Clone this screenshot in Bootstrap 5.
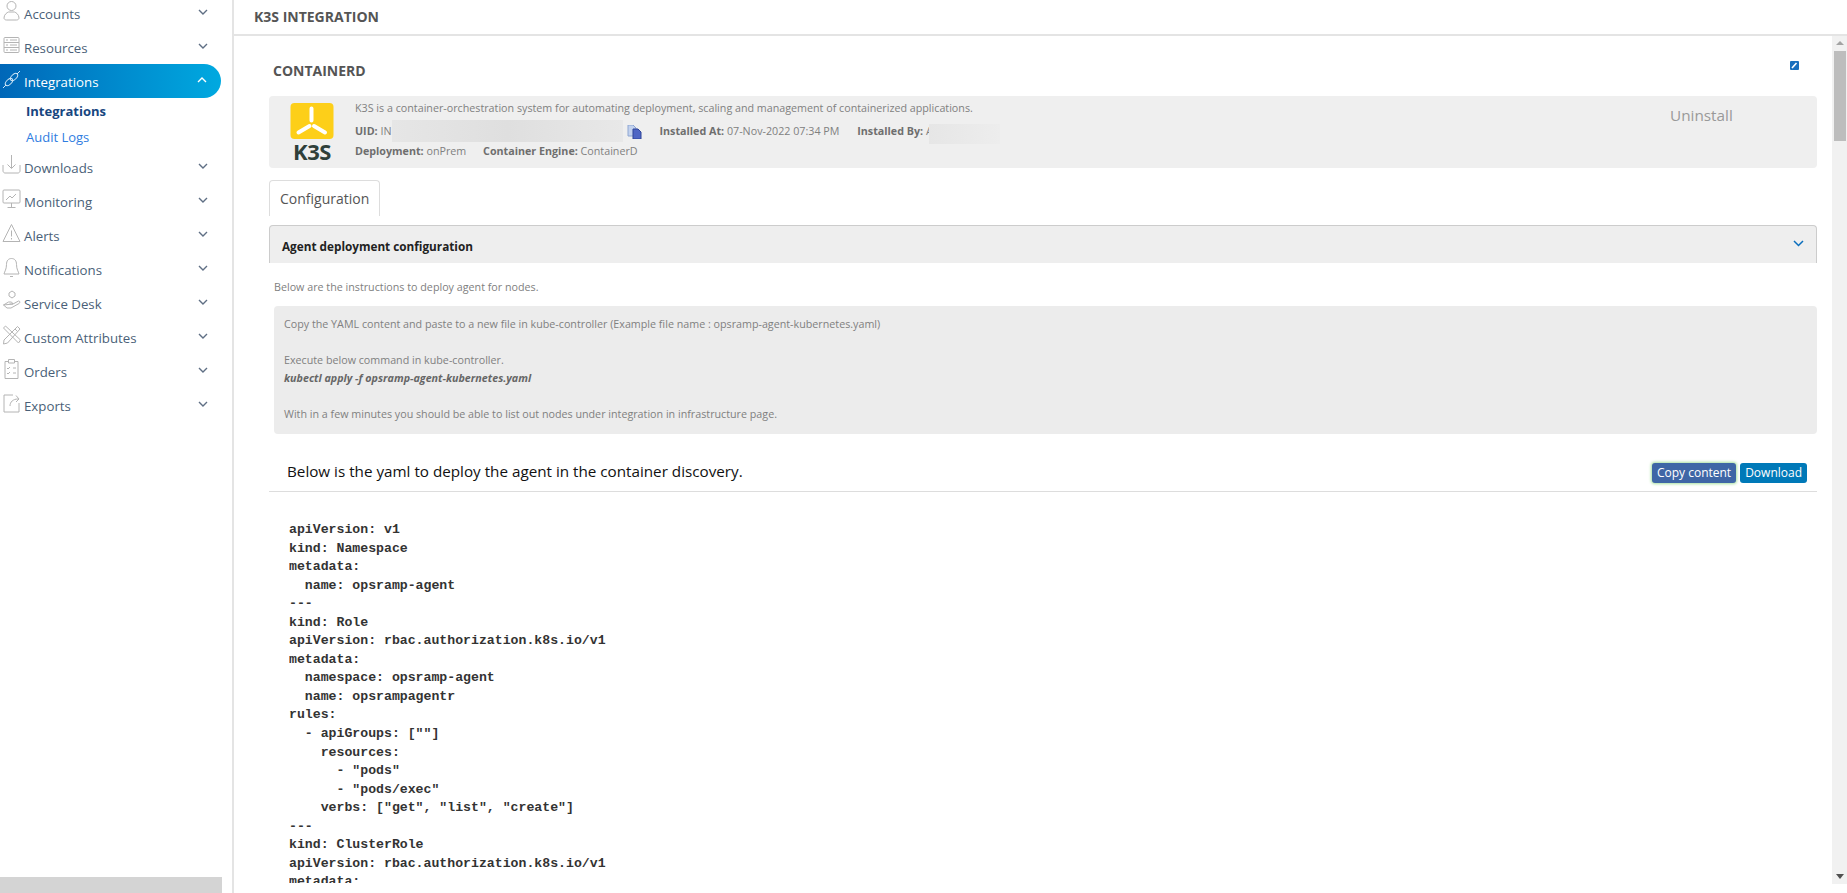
<!DOCTYPE html>
<html lang="en"><head><meta charset="utf-8"><title>K3S Integration</title>
<link href="https://cdn.jsdelivr.net/npm/bootstrap@5.3.0/dist/css/bootstrap.min.css" rel="stylesheet">
<style>
html,body{height:100%;overflow:hidden}
body{font-family:"Open Sans",sans-serif;color:#555;background:#fff}
.app-shell{height:893px}
.side-col{width:234px;flex:none;border-right:2px solid #e4e4e4;height:893px}
.side-list{margin-top:-3px}
.side-link{height:34px;color:#4a5f78;font-size:13.25px;text-decoration:none;padding:2px 14px 0 24px}
.side-link:hover{color:#4a5f78}
.side-ico{width:20px;height:22px;flex:none;margin-left:-23px;margin-right:3px;margin-top:-8px;fill:none;stroke:#b4b4b4;stroke-width:1}
.side-chev{width:10px;height:6px;margin-left:auto;margin-right:10px;margin-top:-6px;fill:none;stroke:#5f6f84;stroke-width:1.4}
.side-active{background:linear-gradient(90deg,#0067b8,#00a9e0);color:#fff;width:221px;border-radius:0 17px 17px 0;padding:4px 6px 0 24px;margin:-1px 0 1px}
.side-active:hover{color:#fff}
.side-active .side-ico{stroke:#cfe6f6}
.side-active .side-chev{stroke:#fff;margin-right:8px}
.side-sub{height:26px;font-size:13px;padding-left:26px;text-decoration:none;color:#2f7de1}
.side-sub.on{font-weight:700;color:#17467f}
.side-foot{height:16px;width:222px;background:#d4d4d4}
.main-col{min-width:0}
.top-bar{height:36px;border-bottom:2px solid #e4e4e4;padding:0 0 2px 20px;font-size:14px;font-weight:700;color:#555}
.pane-wrap{height:848px;min-height:0}
.pane{min-width:0;padding:0 15px 0 35px;overflow:hidden}
.pane-title{font-size:14px;font-weight:700;color:#555;height:60px;padding:24px 0 0 4px}
.edit-ico{width:9px;height:9px;margin:25px 18px 0 0}
.info-box{height:72px;background:#efefef;border-radius:4px;font-size:10.72px;color:#808080;padding-left:21px}
.logo-col{width:44px;flex:none;margin-right:21px;padding-top:7px}
.k3s-word{font-size:22px;font-weight:700;color:#2f3f3a;line-height:21px;letter-spacing:-.4px;text-align:center;margin-top:2px}
.info-lines{padding-top:2px}
.info-lines b{color:#6e6e6e}
.info-row1{height:20px;line-height:20px}
.info-row2{height:21px;line-height:22px;margin-top:2px}
.info-row3{height:20px;line-height:20px}
.mask-uid{display:inline-block;width:231px;height:22px;vertical-align:top;background:linear-gradient(90deg,#e6e6e6,#dfdfdf 50%,#e8e8e8)}
.mask-by{display:inline-block;width:71px;height:20px;vertical-align:top;margin-left:-4px;margin-top:4px;background:linear-gradient(90deg,#e6e6e6,#ededed);position:relative}
.copy-ico{width:15px;height:14px;margin:0 18px 0 4px;vertical-align:-4px}
.gap-at{margin-left:15px}
.gap-b{margin-left:14px}
.uninstall{font-size:15.3px;color:#999;width:147px;flex:none;padding-top:8px}
.tab-strip{margin-top:12px;height:36px;border-bottom:0}
.tab-strip .nav-link{font-size:14px;color:#555;height:36px;padding:7px 10px;border:1px solid #ddd;border-bottom:0;border-radius:4px 4px 0 0;background:#fff}
.acc-head{margin-top:9px;height:38px;background:#eee;border:1px solid #ccc;border-width:1px 1px 0;border-radius:4px 4px 0 0;font-size:11.75px;font-weight:700;color:#222;padding:4px 12px 0 12px}
.acc-chev{width:11px;height:7px;fill:none;stroke:#0a6ebd;stroke-width:1.5;margin-top:-7px}
.note-line{color:#808080;margin:16px 0 11px 5px;line-height:16px;font-size:10.72px}
.steps-box{margin-left:5px;height:128px;background:#ececec;border-radius:4px;padding:9px 10px;font-size:10.72px;line-height:18px;color:#808080}
.steps-box b{color:#666}
.yaml-head{height:58px;border-bottom:1px solid #ddd;padding:0 10px 0 18px;font-size:15.23px;color:#111}
.yaml-head .yaml-btn{font-size:12px;line-height:16px;padding:2px 5px;border-radius:3px;color:#fff;border:0}
.copy-b{background:#3f66a6;box-shadow:0 0 3px 1px #a8e0a0}
.copy-b:hover{background:#3f66a6;color:#fff}
.down-b{background:#0079b8}
.down-b:hover{background:#0079b8;color:#fff}
.yaml-clip{height:391px;overflow:hidden;margin:0}
.yaml-code{margin:29px 0 0 20px;font:700 13.2px/18.55px "Liberation Mono",monospace;color:#333;overflow:hidden}
.scroll-rail{width:15px;flex:none;background:#f1f1f1;padding:0 1px 0 2px}
.rail-up{width:0;height:0;border-left:4px solid transparent;border-right:4px solid transparent;border-bottom:4px solid #a3a3a3;margin:5px auto 6px}
.rail-thumb{height:90px;background:#bdbdbd}
.rail-down{width:0;height:0;border-left:4px solid transparent;border-right:4px solid transparent;border-top:5px solid #505050;margin:0 auto 5px}
</style></head>
<body>
<div class="app-shell d-flex">
 <nav class="side-col d-flex flex-column">
  <div class="side-list d-flex flex-column">
  <a class="side-link d-flex align-items-center" href="#"><svg class="side-ico" viewBox="0 0 20 22"><circle cx="10.500" cy="6" r="4.500"/><path d="M3 18c0-3.500 3-5.500 4.500-6h6c1.500.5 4.500 2.500 4.500 6 0 1-1 2-2.500 2h-10C4 20 3 19 3 18z"/></svg>Accounts<svg class="side-chev" viewBox="0 0 10 6"><path d="M1 1l4 4 4-4"/></svg></a>
  <a class="side-link d-flex align-items-center" href="#"><svg class="side-ico" viewBox="0 0 20 22"><rect x="3" y="3.500" width="15" height="15" rx="1"/><path d="M3 8.500h15M3 13.500h15M5 6h2M5 11h2M5 16h2M9 6h7M9 11h7M9 16h7"/></svg>Resources<svg class="side-chev" viewBox="0 0 10 6"><path d="M1 1l4 4 4-4"/></svg></a>
  <a class="side-link side-active d-flex align-items-center" href="#"><svg class="side-ico" viewBox="0 0 20 22"><ellipse cx="8" cy="14" rx="4.500" ry="2.500" transform="rotate(-45 8 14)"/><ellipse cx="13" cy="9" rx="4.500" ry="2.500" transform="rotate(-45 13 9)"/><path d="M2 20l3-3M16 6l3-3"/></svg>Integrations<svg class="side-chev" viewBox="0 0 10 6"><path d="M1 5l4-4 4 4"/></svg></a>
  <a class="side-sub on d-flex align-items-center" href="#">Integrations</a>
  <a class="side-sub d-flex align-items-center" href="#">Audit Logs</a>
  <a class="side-link d-flex align-items-center" href="#"><svg class="side-ico" viewBox="0 0 20 22"><path d="M10.500 1v13M6.500 10.500l4 4 4-4M2 11v6c0 1 1 2 2 2h13c1 0 2-1 2-2v-6"/></svg>Downloads<svg class="side-chev" viewBox="0 0 10 6"><path d="M1 1l4 4 4-4"/></svg></a>
  <a class="side-link d-flex align-items-center" href="#"><svg class="side-ico" viewBox="0 0 20 22"><rect x="2" y="2" width="17" height="13" rx="1"/><path d="M5 12l4-4 2 2 4-4M6.500 19.500h8M10.500 15v4.500"/></svg>Monitoring<svg class="side-chev" viewBox="0 0 10 6"><path d="M1 1l4 4 4-4"/></svg></a>
  <a class="side-link d-flex align-items-center" href="#"><svg class="side-ico" viewBox="0 0 20 22"><path d="M10.500 2.500L2 19.500h17zM10.500 8.500v6M10.500 16v1.500"/></svg>Alerts<svg class="side-chev" viewBox="0 0 10 6"><path d="M1 1l4 4 4-4"/></svg></a>
  <a class="side-link d-flex align-items-center" href="#"><svg class="side-ico" viewBox="0 0 20 22"><path d="M10.500 2.500c-3 0-5 2-5 6 0 5-2 7-2.500 9.500h15c-.5-2.500-2.500-4.500-2.500-9.500 0-4-2-6-5-6zM9 20.500h3"/></svg>Notifications<svg class="side-chev" viewBox="0 0 10 6"><path d="M1 1l4 4 4-4"/></svg></a>
  <a class="side-link d-flex align-items-center" href="#"><svg class="side-ico" viewBox="0 0 20 22"><path d="M11 1l3 2v3l-3 2-3-2V3zM2.500 15l5-3h3l1.500 2H8.500M12 14l5.500-3c2 0 1.500 2 .5 2.500L10 18H6l-3.500-3z"/></svg>Service Desk<svg class="side-chev" viewBox="0 0 10 6"><path d="M1 1l4 4 4-4"/></svg></a>
  <a class="side-link d-flex align-items-center" href="#"><svg class="side-ico" viewBox="0 0 20 22"><path d="M2.500 4l2-2 15 14-2 3zM16.500 2.500l2.500 2.500L6.500 19l-4 1 .5-4zM14 5l2.500 2.500"/></svg>Custom Attributes<svg class="side-chev" viewBox="0 0 10 6"><path d="M1 1l4 4 4-4"/></svg></a>
  <a class="side-link d-flex align-items-center" href="#"><svg class="side-ico" viewBox="0 0 20 22"><path d="M7.500 3.500H4v17h13v-17h-3.500M7.500 1.500h6V5h-6zM6 10l1 1 2-2M12 10h3M6 15l1 1 2-2M12 15h3"/></svg>Orders<svg class="side-chev" viewBox="0 0 10 6"><path d="M1 1l4 4 4-4"/></svg></a>
  <a class="side-link d-flex align-items-center" href="#"><svg class="side-ico" viewBox="0 0 20 22"><path d="M12 3H3v17h15v-9M9 14c0-4 3-7 8-7M15 3.500l3 3.500-3 3"/></svg>Exports<svg class="side-chev" viewBox="0 0 10 6"><path d="M1 1l4 4 4-4"/></svg></a>
  </div>
  <div class="side-foot mt-auto"></div>
 </nav>
 <div class="main-col flex-grow-1 d-flex flex-column">
  <div class="top-bar d-flex align-items-center">K3S INTEGRATION</div>
  <div class="pane-wrap d-flex">
   <main class="pane flex-grow-1">
    <div class="d-flex justify-content-between align-items-start">
     <div class="pane-title">CONTAINERD</div>
     <svg class="edit-ico" viewBox="0 0 9 9"><rect width="9" height="9" rx="1" fill="#1a6fbd"/><path d="M2 7l4.500-5" stroke="#fff" stroke-width="1.600"/></svg>
    </div>
    <section class="info-box d-flex">
     <div class="logo-col">
      <svg width="44" height="36" viewBox="0 0 44 36" class="d-block"><rect x="0.500" width="43" height="36" rx="4" fill="#fdcf19"/><path d="M21.500 5.500v12M8.500 29.500l11-6.500M24 23l11 6.500" stroke="#fff" stroke-width="4" stroke-linecap="round" fill="none"/></svg>
      <div class="k3s-word">K3S</div>
     </div>
     <div class="info-lines flex-grow-1">
      <div class="info-row1">K3S is a container-orchestration system for automating deployment, scaling and management of containerized applications.</div>
      <div class="info-row2"><b>UID:</b> IN<span class="mask-uid"></span><svg class="copy-ico" viewBox="0 0 15 14"><path d="M1 0h5l3 3v8H1z" fill="#c3d2ee" stroke="#8ea6d2"/><path d="M6 4h5l3 3v7H6z" fill="#4f66c4" stroke="#2f4499"/></svg><b>Installed At:</b> 07-Nov-2022 07:34 PM <b class="gap-at">Installed By:</b> A<span class="mask-by"></span></div>
      <div class="info-row3"><b>Deployment:</b> onPrem <b class="gap-b">Container Engine:</b> ContainerD</div>
     </div>
     <div class="uninstall">Uninstall</div>
    </section>
    <ul class="nav tab-strip"><li class="nav-item"><a class="nav-link" href="#">Configuration</a></li></ul>
    <div class="acc-head d-flex align-items-center justify-content-between"><span>Agent deployment configuration</span><svg class="acc-chev" viewBox="0 0 11 7"><path d="M1 1l4.500 4.500L10 1"/></svg></div>
    <p class="note-line">Below are the instructions to deploy agent for nodes.</p>
    <div class="steps-box">
     Copy the YAML content and paste to a new file in kube-controller (Example file name : opsramp-agent-kubernetes.yaml)<br><br>
     Execute below command in kube-controller.<br>
     <b><i>kubectl apply -f opsramp-agent-kubernetes.yaml</i></b><br><br>
     With in a few minutes you should be able to list out nodes under integration in infrastructure page.
    </div>
    <div class="yaml-head d-flex align-items-end justify-content-between pb-2">
     <span>Below is the yaml to deploy the agent in the container discovery.</span>
     <span class="d-flex gap-1"><button class="btn yaml-btn copy-b">Copy content</button><button class="btn yaml-btn down-b">Download</button></span>
    </div>
    <div class="yaml-clip"><pre class="yaml-code">apiVersion: v1
kind: Namespace
metadata:
  name: opsramp-agent
---
kind: Role
apiVersion: rbac.authorization.k8s.io/v1
metadata:
  namespace: opsramp-agent
  name: opsrampagentr
rules:
  - apiGroups: [""]
    resources:
      - "pods"
      - "pods/exec"
    verbs: ["get", "list", "create"]
---
kind: ClusterRole
apiVersion: rbac.authorization.k8s.io/v1
metadata:</pre></div>
   </main>
   <div class="scroll-rail d-flex flex-column"><div class="rail-up"></div><div class="rail-thumb"></div><div class="rail-down mt-auto"></div></div>
  </div>
 </div>
</div>
</body></html>
